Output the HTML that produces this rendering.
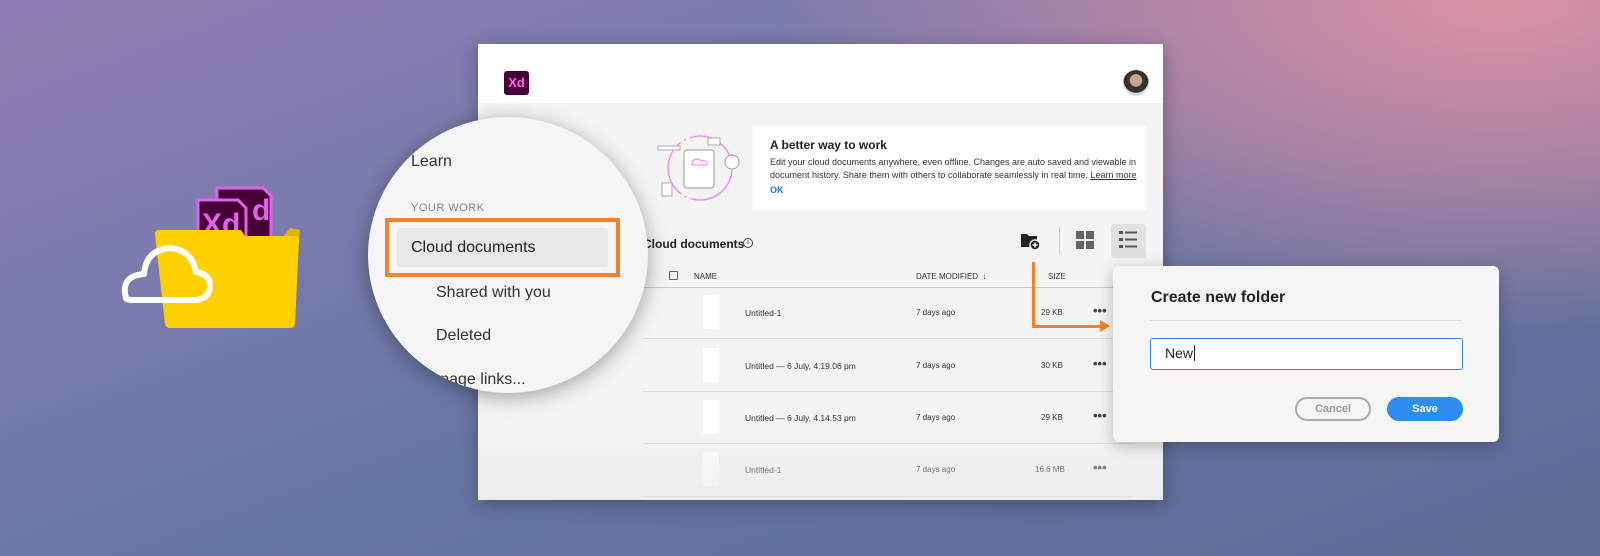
<!DOCTYPE html>
<html><head><meta charset="utf-8"><style>
*{margin:0;padding:0;box-sizing:border-box}
body{width:1600px;height:556px;overflow:hidden;position:relative;font-family:"Liberation Sans",sans-serif;
background:linear-gradient(160deg,#8f7db4 0%,#7d7cae 25%,#6676a4 55%,#5d6a96 100%);}
.pink{position:absolute;inset:0;background:radial-gradient(ellipse 900px 420px at 1500px 0px,#dc92a4 0%,rgba(210,140,165,.7) 35%,rgba(180,130,170,0) 80%);}
.a{position:absolute}
.win{left:478px;top:44px;width:685px;height:456px;background:#f4f4f4;box-shadow:0 4px 18px rgba(0,0,0,.3);overflow:hidden}
.hdr{left:0;top:0;width:685px;height:59px;background:#fff}
.t{position:absolute;white-space:nowrap;color:#333}
.row{position:absolute;left:165px;width:490px;height:1px;background:#ddd}
.thumb{position:absolute;left:225px;width:16px;height:34px;background:#fff}
.dots{position:absolute;left:615px;font-size:13px;font-weight:bold;color:#444;letter-spacing:0px}
</style></head><body>
<div class="pink"></div>

<!-- folder icon -->
<svg class="a" style="left:110px;top:180px" width="200" height="150" viewBox="0 0 200 150">
<path d="M107 8h46l8 8v50h-54z" fill="#470137" stroke="#e062e8" stroke-width="3"/>
<text x="142" y="40" font-family="Liberation Sans" font-size="30" fill="#e062e8" font-weight="bold">d</text>
<path d="M88 20h40l8 8v40h-48z" fill="#470137" stroke="#e062e8" stroke-width="3"/>
<text x="92" y="54" font-family="Liberation Sans" font-size="30" fill="#e062e8" font-weight="bold">Xd</text>
<path d="M180 48l10 2-8 96-80-2z" fill="#e2b400"/>
<path d="M45 54q0-4 4-4h82l4 6h50q4 0 4 4l-4 84q-1 4-5 4H60q-4 0-5-4z" fill="#ffd000"/>
<path d="M16 118q-6-22 18-24q2-24 26-26q22 2 26 24q14 2 14 14q0 12-14 14H24q-8 0-8-2z" fill="none" stroke="#fff" stroke-width="6" stroke-linejoin="round"/>
</svg>

<div class="a win">
 <div class="a" style="left:5px;top:4px;width:8px;height:8px;border-radius:50%;background:#fe5f57"></div>
 <div class="a hdr"></div>
 <div class="a" style="left:26px;top:27px;width:25px;height:24px;background:#470137;border-radius:3px;color:#ff61f6;font-size:13px;font-weight:bold;text-align:center;line-height:24px">Xd</div>
 <div class="a" style="left:645px;top:26px;width:26px;height:26px;border-radius:50%;background:radial-gradient(circle at 50% 40%,#c9a48a 0 30%,#333 32% 60%,#ddd 62%)"></div>
 <!-- banner -->
 <div class="a" style="left:165px;top:82px;width:503px;height:84px;background:#fff"></div>
 <div class="a" style="left:165px;top:82px;width:110px;height:84px;background:#f4f4f4"></div>
 <svg class="a" style="left:170px;top:84px" width="100" height="80"><circle cx="52" cy="40" r="32" fill="none" stroke="#f57ff5" stroke-width="1.3" stroke-dasharray="60 4 2 4"/><rect x="36" y="22" width="30" height="38" rx="3" fill="#fff" stroke="#999"/><path d="M44 36a5 5 0 0 1 9-3a4 4 0 0 1 6 4h-15z" fill="none" stroke="#f57ff5"/><circle cx="84" cy="34" r="7" fill="#fff" stroke="#999"/><rect x="10" y="18" width="22" height="4" fill="#fff" stroke="#aaa"/><rect x="14" y="55" width="10" height="13" fill="#fff" stroke="#aaa"/><rect x="60" y="10" width="12" height="7" fill="#fff" stroke="#aaa"/></svg>
 <div class="t" style="left:292px;top:94px;font-size:12px;font-weight:bold;color:#222">A better way to work</div>
 <div class="t" style="left:292px;top:112px;font-size:9px;line-height:13px;color:#333">Edit your cloud documents anywhere, even offline. Changes are auto saved and viewable in<br>document history. Share them with others to collaborate seamlessly in real time. <u>Learn more</u></div>
 <div class="t" style="left:292px;top:141px;font-size:9px;font-weight:bold;color:#1473e6">OK</div>
 <!-- toolbar -->
 <div class="t" style="left:165px;top:193px;font-size:12px;font-weight:bold;color:#222">Cloud documents</div>
 <div class="a" style="left:265px;top:194px;width:10px;height:10px;border:1px solid #444;border-radius:50%;font-size:7px;text-align:center;line-height:8px">i</div>
 <svg class="a" style="left:542px;top:187px" width="22" height="20"><path d="M1 3h6l2 2h8v11H1z" fill="#222"/><circle cx="15" cy="14" r="5" fill="#222" stroke="#f4f4f4" stroke-width="1.5"/><path d="M12.5 14h5M15 11.5v5" stroke="#fff" stroke-width="1.5"/></svg>
 <div class="a" style="left:581px;top:183px;width:1px;height:27px;background:#ccc"></div>
 <svg class="a" style="left:598px;top:187px" width="20" height="20"><rect x="0" y="0" width="8" height="8" fill="#666"/><rect x="10" y="0" width="8" height="8" fill="#666"/><rect x="0" y="10" width="8" height="8" fill="#666"/><rect x="10" y="10" width="8" height="8" fill="#666"/></svg>
 <div class="a" style="left:633px;top:180px;width:35px;height:34px;background:#e1e1e1;border-radius:3px"></div>
 <svg class="a" style="left:641px;top:187px" width="20" height="20"><g fill="#555"><rect x="0" y="0" width="4" height="3"/><rect x="6" y="0.5" width="12" height="2"/><rect x="0" y="7" width="4" height="3"/><rect x="6" y="7.5" width="12" height="2"/><rect x="0" y="14" width="4" height="3"/><rect x="6" y="14.5" width="12" height="2"/></g></svg>
 <!-- table header -->
 <div class="a" style="left:191px;top:227px;width:9px;height:9px;border:1px solid #666;border-radius:1px"></div>
 <div class="t" style="left:216px;top:228px;font-size:8px;color:#333">NAME</div>
 <div class="t" style="left:438px;top:228px;font-size:8px;color:#333">DATE MODIFIED &nbsp;↓</div>
 <div class="t" style="left:570px;top:228px;font-size:8px;color:#333">SIZE</div>
 <div class="row" style="top:243px;background:#ccc"></div>
 <div class="thumb" style="top:251px"></div><div class="t" style="left:267px;top:264px;font-size:8.5px">Untitled-1</div><div class="t" style="left:438px;top:264px;font-size:8px">7 days ago</div><div class="t" style="left:563px;top:264px;font-size:8px">29 KB</div><div class="dots" style="top:259px">•••</div>
 <div class="row" style="top:294px"></div>
 <div class="thumb" style="top:304px"></div><div class="t" style="left:267px;top:317px;font-size:8.5px">Untitled — 6 July, 4.19.06 pm</div><div class="t" style="left:438px;top:317px;font-size:8px">7 days ago</div><div class="t" style="left:563px;top:317px;font-size:8px">30 KB</div><div class="dots" style="top:312px">•••</div>
 <div class="row" style="top:347px"></div>
 <div class="thumb" style="top:356px"></div><div class="t" style="left:267px;top:369px;font-size:8.5px">Untitled — 6 July, 4.14.53 pm</div><div class="t" style="left:438px;top:369px;font-size:8px">7 days ago</div><div class="t" style="left:563px;top:369px;font-size:8px">29 KB</div><div class="dots" style="top:364px">•••</div>
 <div class="row" style="top:399px"></div>
 <div class="thumb" style="top:408px"></div><div class="t" style="left:267px;top:421px;font-size:8.5px">Untitled-1</div><div class="t" style="left:438px;top:421px;font-size:8px">7 days ago</div><div class="t" style="left:557px;top:421px;font-size:8px">16.6 MB</div><div class="dots" style="top:416px">•••</div>
 <div class="row" style="top:452px"></div>
 <div class="a" style="left:0;top:380px;width:685px;height:76px;background:linear-gradient(rgba(244,244,244,0),rgba(230,230,230,.6))"></div>
</div>

<!-- orange arrow -->
<div class="a" style="left:1032px;top:262px;width:3px;height:65px;background:#f5802a"></div>
<div class="a" style="left:1032px;top:325px;width:70px;height:3px;background:#f5802a"></div>
<div class="a" style="left:1100px;top:320px;width:0;height:0;border-left:10px solid #f5802a;border-top:6.5px solid transparent;border-bottom:6.5px solid transparent"></div>

<!-- dialog -->
<div class="a" style="left:1113px;top:266px;width:386px;height:176px;background:#f5f5f5;border-radius:6px;box-shadow:0 4px 16px rgba(0,0,0,.25)">
 <div class="t" style="left:38px;top:23px;font-size:16px;font-weight:bold;color:#222">Create new folder</div>
 <div class="a" style="left:37px;top:54px;width:312px;height:1px;background:#ddd"></div>
 <div class="a" style="left:37px;top:72px;width:313px;height:32px;background:#fff;border:1.5px solid #2f86e8;border-radius:3px"></div>
 <div class="t" style="left:52px;top:79px;font-size:14px;color:#222">New<span style="border-left:1px solid #222;margin-left:1px">&nbsp;</span></div>
 <div class="a" style="left:182px;top:131px;width:76px;height:24px;border:2px solid #aaa;border-radius:12px;text-align:center;line-height:20px;font-size:11px;font-weight:bold;color:#999">Cancel</div>
 <div class="a" style="left:274px;top:131px;width:76px;height:24px;background:#2d8eee;border-radius:12px;text-align:center;line-height:24px;font-size:11px;font-weight:bold;color:#fff">Save</div>
</div>

<!-- magnifier -->
<div class="a" style="left:368px;top:117px;width:280px;height:276px;border-radius:50%;background:#f5f5f5;box-shadow:0 4px 20px rgba(0,0,0,.35);overflow:hidden">
 <div class="t" style="left:43px;top:36px;font-size:16px;color:#333">Learn</div>
 <div class="t" style="left:43px;top:85px;font-size:11px;color:#888;letter-spacing:.5px">YOUR WORK</div>
 <div class="a" style="left:29px;top:111px;width:211px;height:39px;background:#e8e8e8;border-radius:3px"></div>
 <div class="t" style="left:43px;top:122px;font-size:16px;color:#222">Cloud documents</div>
 <div class="t" style="left:68px;top:167px;font-size:16px;color:#333">Shared with you</div>
 <div class="t" style="left:68px;top:210px;font-size:16px;color:#333">Deleted</div>
 <div class="t" style="left:50px;top:254px;font-size:16px;color:#333">Manage links...</div>
</div>
<div class="a" style="left:385px;top:218px;width:235px;height:59px;border:4px solid #f5802a"></div>
</body></html>
